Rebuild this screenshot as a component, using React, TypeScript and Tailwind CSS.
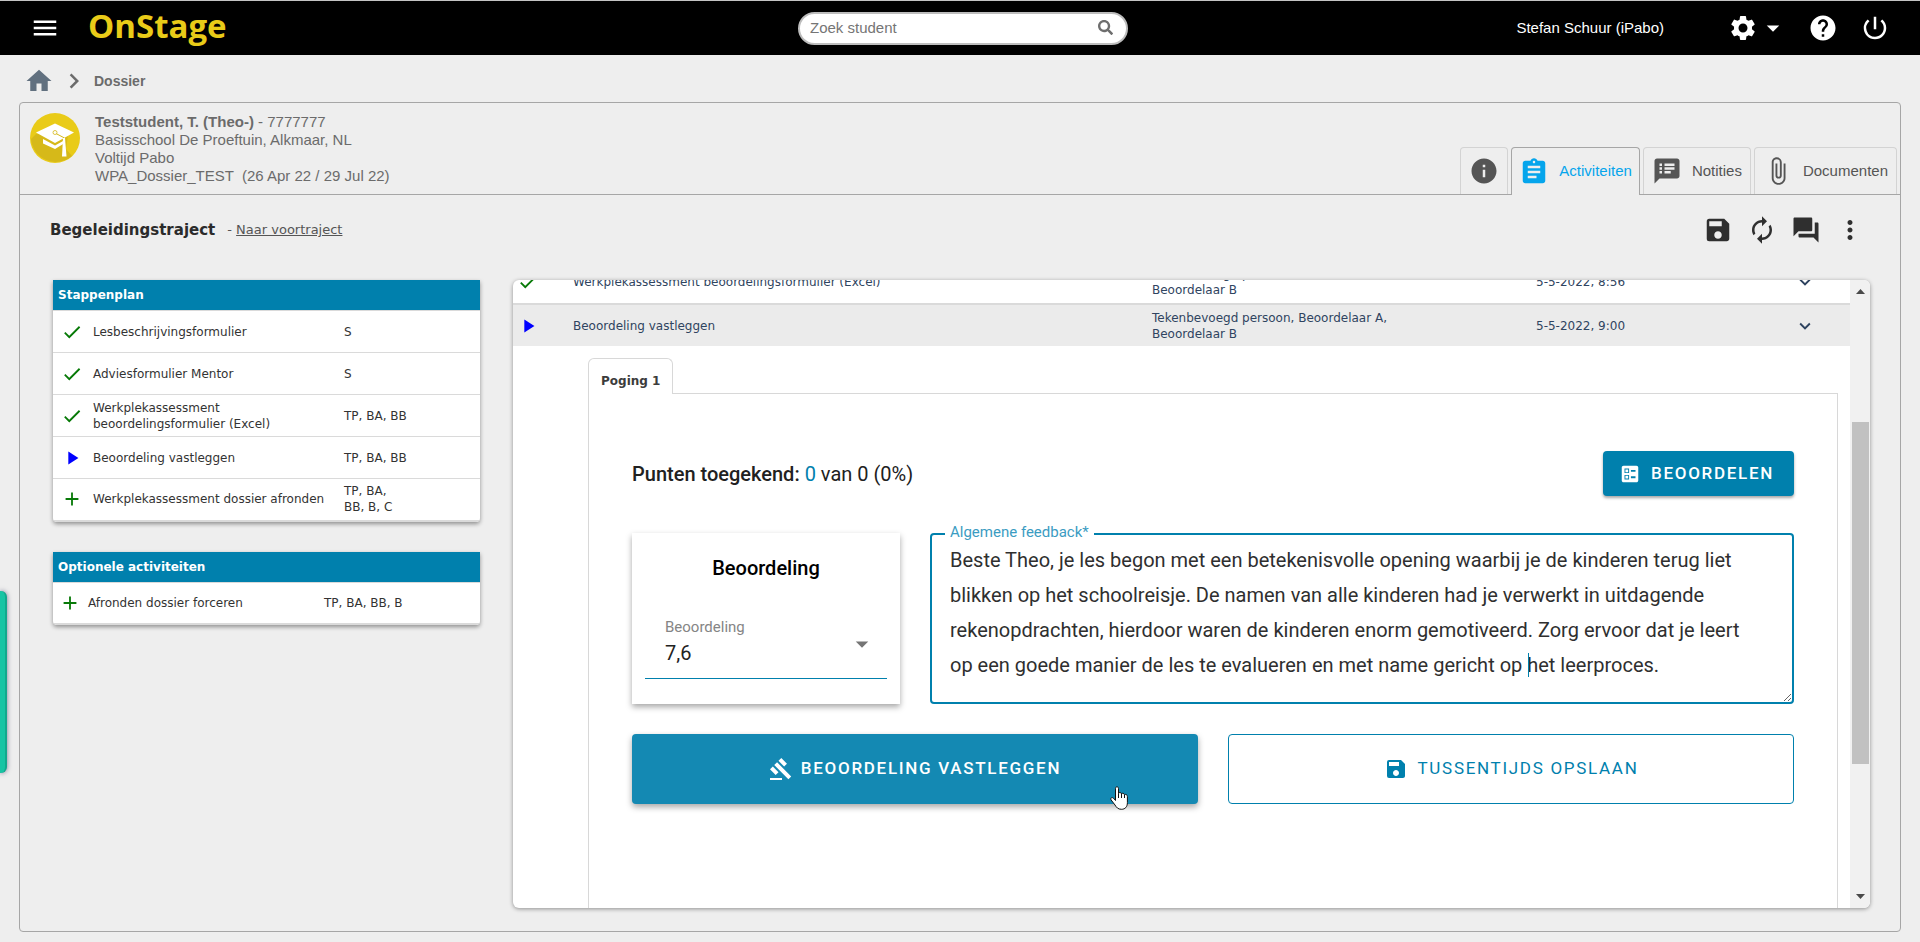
import { FC, ReactNode, useState } from 'react'
import { IconType } from 'react-icons'
import { FaSearch } from 'react-icons/fa'
import {
  MdAdd,
  MdArrowDropDown,
  MdAssignment,
  MdAttachFile,
  MdAutorenew,
  MdBallot,
  MdCheck,
  MdChevronRight,
  MdGavel,
  MdHelp,
  MdHome,
  MdInfo,
  MdKeyboardArrowDown,
  MdMenu,
  MdMoreVert,
  MdPlayArrow,
  MdPowerSettingsNew,
  MdQuestionAnswer,
  MdSave,
  MdSettings,
  MdSpeakerNotes,
} from 'react-icons/md'

type Status = 'done' | 'current' | 'open'

interface IStep {
  name: ReactNode
  roles: ReactNode
  status: Status
}

const steps: IStep[] = [
  { name: 'Lesbeschrijvingsformulier', roles: 'S', status: 'done' },
  { name: 'Adviesformulier Mentor', roles: 'S', status: 'done' },
  {
    name: (
      <>
        Werkplekassessment
        <br />
        beoordelingsformulier (Excel)
      </>
    ),
    roles: 'TP, BA, BB',
    status: 'done',
  },
  { name: 'Beoordeling vastleggen', roles: 'TP, BA, BB', status: 'current' },
  {
    name: 'Werkplekassessment dossier afronden',
    roles: (
      <>
        TP, BA,
        <br />
        BB, B, C
      </>
    ),
    status: 'open',
  },
]

const feedbackText =
  'Beste Theo, je les begon met een betekenisvolle opening waarbij je de kinderen terug liet blikken op het schoolreisje. De namen van alle kinderen had je verwerkt in uitdagende rekenopdrachten, hierdoor waren de kinderen enorm gemotiveerd. Zorg ervoor dat je leert op een goede manier de les te evalueren en met name gericht op het leerproces.'

const StatusIcon: FC<{ status: Status }> = ({ status }) => {
  if (status === 'done') return <MdCheck className="size-[22px] text-[#087a08]" />
  if (status === 'current') return <MdPlayArrow className="size-[22px] text-[#0000ff]" />
  return <MdAdd className="size-[22px] text-[#087a08]" />
}

const IconButton: FC<{ icon: IconType; label: string }> = ({ icon: Icon, label }) => (
  <button type="button" aria-label={label}>
    <Icon className="size-[30px]" />
  </button>
)

const Avatar: FC = () => (
  <svg viewBox="0 0 50 50" className="size-[50px] shrink-0" aria-hidden="true">
    <circle cx="25" cy="25" r="25" fill="#e9cb18" />
    <path d="M6 21 L1 26 A25 25 0 0 0 42 43 L36 36 L38 22 Z" fill="#d6b919" />
    <path d="M25 10.500 L44 19.500 L25 30 L6 19.500 Z" fill="#fff" />
    <path d="M13 26 L25 32.500 L34 27.500 V30.500 L25 36 L13 30.500 Z" fill="#fff" />
    <path d="M25 20 L34.500 25 V36" fill="none" stroke="#d6b919" strokeWidth="1" />
    <circle cx="25" cy="19.500" r="2" fill="#fff" stroke="#d6b919" strokeWidth="0.800" />
    <path d="M33 25 H35 L36.500 43.500 H32 Z" fill="#fff" />
  </svg>
)

const TopBar: FC = () => (
  <header className="grid h-[55px] shrink-0 grid-cols-[1fr_336px_1fr] items-center border-t border-[#c4c4c4] bg-black px-[30px] font-['Liberation_Sans',sans-serif] text-[15px] text-white">
    <div className="flex items-center gap-7">
      <IconButton icon={MdMenu} label="Menu" />
      <a
        href="#"
        className="pb-1 font-['Open_Sans',sans-serif] text-[33px] leading-[44px] font-bold text-[#e9cb18]"
      >
        OnStage
      </a>
    </div>

    <form className="relative pl-1.5" onSubmit={(e) => e.preventDefault()}>
      <input
        type="text"
        aria-label="Zoek student"
        placeholder="Zoek student"
        className="h-[33px] w-full rounded-full border-2 border-[#bdbdbd] bg-white px-[10px] pb-0.5 text-black placeholder:text-[#757575]"
      />
      <button type="submit" aria-label="Zoeken" className="absolute top-2 right-[15px]">
        <FaSearch className="size-[15px] text-[#6e6e6e]" />
      </button>
    </form>

    <div className="flex items-center justify-end">
      <span className="mr-16">Stefan Schuur (iPabo)</span>
      <button type="button" aria-label="Instellingen" className="mr-5 flex items-center">
        <MdSettings className="size-[30px]" />
        <MdArrowDropDown className="size-[30px]" />
      </button>
      <div className="flex items-center gap-[22px]">
        <IconButton icon={MdHelp} label="Help" />
        <IconButton icon={MdPowerSettingsNew} label="Uitloggen" />
      </div>
    </div>
  </header>
)

const Breadcrumb: FC = () => (
  <nav className="flex h-[47px] shrink-0 items-center pt-1 pl-6 font-['Liberation_Sans',sans-serif] text-sm font-bold text-[#6b6b6b]">
    <a href="#" aria-label="Home">
      <MdHome className="size-[30px] text-[#61707f]" />
    </a>
    <MdChevronRight className="mx-[5px] size-[30px]" />
    <span>Dossier</span>
  </nav>
)

interface ITab {
  icon: IconType
  label?: string
  active?: boolean
}

const tabs: ITab[] = [
  { icon: MdInfo },
  { icon: MdAssignment, label: 'Activiteiten', active: true },
  { icon: MdSpeakerNotes, label: 'Notities' },
  { icon: MdAttachFile, label: 'Documenten' },
]

const StudentHeader: FC = () => (
  <div className="flex shrink-0 justify-between border-b border-[#a6a6a6] pl-[10px] font-['Liberation_Sans',sans-serif] text-[15px] text-[#6b6b6b]">
    <div className="flex gap-[15px] pt-[10px] pb-[9px]">
      <Avatar />
      <div className="leading-[18px]">
        <p>
          <b>Teststudent, T. (Theo-)</b> - 7777777
        </p>
        <p>Basisschool De Proeftuin, Alkmaar, NL</p>
        <p>Voltijd Pabo</p>
        <p>WPA_Dossier_TEST &nbsp;(26 Apr 22 / 29 Jul 22)</p>
      </div>
    </div>

    <div className="-mb-px flex items-end gap-[3px] pr-[3px]">
      {tabs.map(({ icon: Icon, label, active }) => (
        <button
          key={label ?? 'info'}
          type="button"
          aria-label={label ?? 'Informatie'}
          className={
            active
              ? 'flex h-12 items-center gap-[10px] rounded-t border border-b-0 border-[#a6a6a6] bg-[#eee] px-[7px] text-[#05a5ec]'
              : 'mb-px flex h-[47px] items-center gap-[10px] rounded-t border border-b-0 border-[#d3d3d3] px-2 text-[#555]'
          }
        >
          <Icon className="size-[30px]" />
          {label && <span>{label}</span>}
        </button>
      ))}
    </div>
  </div>
)

const TitleRow: FC = () => (
  <div className="flex shrink-0 items-center justify-between pt-5 pr-[35px] pb-[35px] pl-[30px]">
    <div className="flex items-center gap-3">
      <h1 className="text-[15px] font-bold text-[#2b2b2b]">Begeleidingstraject</h1>
      <span className="text-[13px] text-[#555]">
        -{' '}
        <a href="#" className="underline">
          Naar voortraject
        </a>
      </span>
    </div>
    <div className="flex gap-[14px] text-[#2f2f2f]">
      <IconButton icon={MdSave} label="Opslaan" />
      <IconButton icon={MdAutorenew} label="Vernieuwen" />
      <IconButton icon={MdQuestionAnswer} label="Berichten" />
      <IconButton icon={MdMoreVert} label="Meer" />
    </div>
  </div>
)

const StepCard: FC<{ title: string; items: IStep[]; compact?: boolean }> = ({
  title,
  items,
  compact,
}) => (
  <section className="overflow-hidden rounded-b bg-white shadow-[0_2px_4px_rgba(0,0,0,0.4)]">
    <h2 className="bg-[#0080ad] px-[5px] text-xs leading-[30px] font-bold text-white">{title}</h2>
    <table className="w-full table-fixed border-b-2 border-[#dadada] text-left text-xs leading-4 text-[#333]">
      <colgroup>
        <col className={compact ? 'w-[35px]' : 'w-10'} />
        <col className={compact ? 'w-[236px]' : 'w-[251px]'} />
        <col />
      </colgroup>
      <tbody>
        {items.map((item, i) => (
          <tr key={i} className="h-[42px] border-t border-[#dadada]">
            <td className={compact ? 'pl-[6px]' : 'pl-2'}>
              <StatusIcon status={item.status} />
            </td>
            <td className="whitespace-nowrap">{item.name}</td>
            <td>{item.roles}</td>
          </tr>
        ))}
      </tbody>
    </table>
  </section>
)

const ActivityTable: FC = () => (
  <table className="-mt-5 w-full table-fixed text-left text-xs leading-4 text-[#2f4460]">
    <colgroup>
      <col className="w-[60px]" />
      <col />
      <col className="w-96" />
      <col className="w-56" />
      <col className="w-[90px]" />
    </colgroup>
    <tbody>
      <tr className="h-11 border-b-2 border-[#dadada]">
        <td className="pl-1">
          <StatusIcon status="done" />
        </td>
        <td>Werkplekassessment beoordelingsformulier (Excel)</td>
        <td>
          Tekenbevoegd persoon, Beoordelaar A,
          <br />
          Beoordelaar B
        </td>
        <td>5-5-2022, 8:56</td>
        <td>
          <button type="button" aria-label="Openklappen" className="ml-[34px] flex">
            <MdKeyboardArrowDown className="size-[22px]" />
          </button>
        </td>
      </tr>
      <tr className="h-[42px] bg-[#ebebeb]">
        <td className="pl-1">
          <StatusIcon status="current" />
        </td>
        <td>Beoordeling vastleggen</td>
        <td>
          Tekenbevoegd persoon, Beoordelaar A,
          <br />
          Beoordelaar B
        </td>
        <td>5-5-2022, 9:00</td>
        <td>
          <button type="button" aria-label="Inklappen" className="ml-[34px] flex">
            <MdKeyboardArrowDown className="size-[22px]" />
          </button>
        </td>
      </tr>
    </tbody>
  </table>
)

const HandPointer: FC = () => (
  <svg viewBox="0 0 18 24" className="absolute right-[70px] -bottom-[6px] h-6 w-[18px]" aria-hidden="true">
    <path
      d="M5.500 14.500 V2.500 C5.500 0.200 8.500 0.200 8.500 2.500 V7.500 C9 6 11.500 6.200 11.500 8 C12.200 6.700 14.300 7.200 14.500 8.800 C15.500 7.900 17.400 8.600 17.400 10.500 V16.500 C17.400 21 15 23.300 11.500 23.300 C8 23.300 6.500 21.500 5 19 L1 13.800 C0 12 2.200 10.800 3.500 12.200 Z"
      fill="#fff"
      stroke="#111"
      strokeWidth="1"
    />
    <path d="M8.500 7.500 V12 M11.500 8 V12 M14.500 9 V12" stroke="#111" strokeWidth="1" />
  </svg>
)

const GradeCard: FC = () => {
  const [grade, setGrade] = useState('7,6')

  return (
    <div className="w-[268px] shrink-0 bg-white px-[13px] pt-[21px] pb-[25px] shadow-[0_3px_6px_rgba(0,0,0,0.35)]">
      <h3 className="mb-9 text-center text-xl leading-7 font-medium text-black">Beoordeling</h3>
      <div className="relative">
        <label htmlFor="grade" className="block pl-5 text-[15px] leading-[18px] text-[#858585]">
          Beoordeling
        </label>
        <select
          id="grade"
          value={grade}
          onChange={(e) => setGrade(e.target.value)}
          className="h-[43px] w-full appearance-none border-b border-[#0080ad] pb-2 pl-5 text-xl text-[#222]"
        >
          <option>7,6</option>
          <option>8,0</option>
        </select>
        <MdArrowDropDown className="pointer-events-none absolute top-[11px] right-[10px] size-[30px] text-[#757575]" />
      </div>
    </div>
  )
}

const FeedbackField: FC = () => {
  const [feedback, setFeedback] = useState(feedbackText)

  return (
    <div className="relative flex flex-1">
      <label
        htmlFor="feedback"
        className="absolute -top-[10px] left-[15px] bg-white px-[5px] text-[15px] leading-[18px] text-[#3b9cc2]"
      >
        Algemene feedback*
      </label>
      <textarea
        id="feedback"
        value={feedback}
        onChange={(e) => setFeedback(e.target.value)}
        className="w-full resize-y rounded border-2 border-[#0080ad] pt-2 pr-9 pl-[18px] text-xl leading-[35px] text-[#2f2f2f] outline-none"
      />
      <span className="absolute top-[120px] left-[598px] h-6 w-px bg-[#0080ad]" />
    </div>
  )
}

const AttemptPanel: FC = () => (
  <div className="flex flex-1 flex-col pt-3 pr-3 pl-[75px]">
    <button
      type="button"
      className="relative z-10 -mb-px h-9 self-start rounded-t-md border border-b-0 border-[#d8d8d8] bg-white px-3 pt-2 text-xs font-bold text-[#3c3c3c]"
    >
      Poging 1
    </button>

    <div className="flex-1 border border-b-0 border-[#d8d8d8] px-[43px] pt-[57px] font-['Roboto',sans-serif]">
      <div className="flex items-center justify-between">
        <p className="text-xl text-[#212121]">
          <b className="font-medium">Punten toegekend:</b> <span className="text-[#0080ad]">0</span> van 0
          (0%)
        </p>
        <button
          type="button"
          className="flex h-[45px] items-center gap-[10px] rounded bg-[#0080ad] pr-5 pl-4 text-[17px] font-medium tracking-widest text-white shadow-[0_2px_3px_rgba(0,0,0,0.35)]"
        >
          <MdBallot className="size-[22px]" />
          BEOORDELEN
        </button>
      </div>

      <div className="mt-[37px] flex gap-[30px]">
        <GradeCard />
        <FeedbackField />
      </div>

      <div className="mt-[30px] grid grid-cols-2 gap-[30px]">
        <button
          type="button"
          className="relative flex h-[70px] items-center justify-center gap-2 rounded bg-[#1489b3] text-[17px] font-medium tracking-widest text-white shadow-[0_3px_6px_rgba(0,0,0,0.35)]"
        >
          <MdGavel className="size-6" />
          BEOORDELING VASTLEGGEN
          <HandPointer />
        </button>
        <button
          type="button"
          className="flex h-[70px] items-center justify-center gap-[10px] rounded border border-[#0080ad] text-[17px] tracking-widest text-[#0080ad]"
        >
          <MdSave className="size-6" />
          TUSSENTIJDS OPSLAAN
        </button>
      </div>
    </div>
  </div>
)

const ScrollTrack: FC = () => (
  <div className="flex w-5 flex-col items-center bg-[#f1f1f1] py-[9px] text-[#4a4a4a]">
    <svg viewBox="0 0 9 5" className="h-[5px] w-[9px]">
      <path d="M0 5 L4.500 0 L9 5 Z" fill="currentColor" />
    </svg>
    <div className="flex-[128]" />
    <div className="w-[17px] flex-[342] bg-[#c1c1c1]" />
    <div className="flex-[130]" />
    <svg viewBox="0 0 9 5" className="h-[5px] w-[9px]">
      <path d="M0 0 L4.500 5 L9 0 Z" fill="currentColor" />
    </svg>
  </div>
)

const App: FC = () => {
  return (
    <div className="relative flex h-screen flex-col bg-[#eee] font-['DejaVu_Sans',sans-serif]">
      <TopBar />
      <Breadcrumb />

      <main className="mx-[19px] mb-[10px] flex min-h-0 flex-1 flex-col rounded border border-[#a6a6a6]">
        <StudentHeader />
        <TitleRow />

        <div className="flex min-h-0 flex-1 gap-[33px] pr-[30px] pb-[23px] pl-[33px]">
          <div className="flex w-[427px] shrink-0 flex-col gap-[30px]">
            <StepCard title="Stappenplan" items={steps} />
            <StepCard
              title="Optionele activiteiten"
              compact
              items={[{ name: 'Afronden dossier forceren', roles: 'TP, BA, BB, B', status: 'open' }]}
            />
          </div>

          <div className="flex min-w-0 flex-1 overflow-hidden rounded-md bg-white shadow-[0_1px_4px_rgba(0,0,0,0.4)]">
            <div className="flex min-w-0 flex-1 flex-col">
              <ActivityTable />
              <AttemptPanel />
            </div>
            <ScrollTrack />
          </div>
        </div>
      </main>

      <button
        type="button"
        aria-label="Paneel openen"
        className="absolute top-[591px] left-0 h-[182px] w-[7px] rounded-r-md border-r-2 border-[#12a88c] bg-[#17c4a4] shadow-[0_0_5px_rgba(0,0,60,0.5)]"
      />
    </div>
  )
}

export default App
